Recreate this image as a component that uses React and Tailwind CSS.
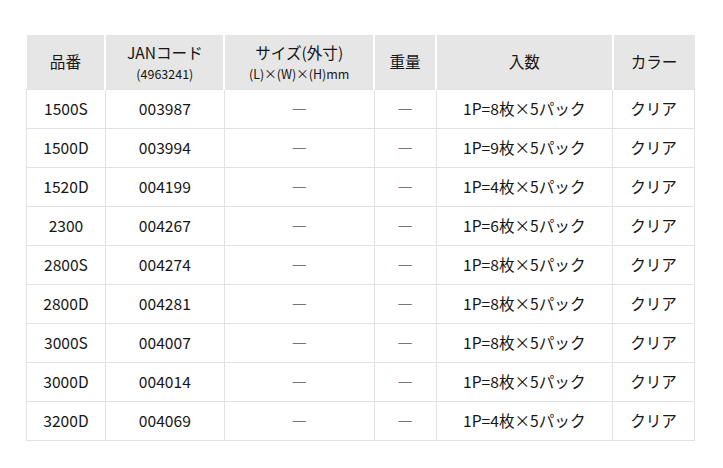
import React from "react";

const rows = [
  ["1500S", "003987", "1P=8枚×5パック"],
  ["1500D", "003994", "1P=9枚×5パック"],
  ["1520D", "004199", "1P=4枚×5パック"],
  ["2300", "004267", "1P=6枚×5パック"],
  ["2800S", "004274", "1P=8枚×5パック"],
  ["2800D", "004281", "1P=8枚×5パック"],
  ["3000S", "004007", "1P=8枚×5パック"],
  ["3000D", "004014", "1P=8枚×5パック"],
  ["3200D", "004069", "1P=4枚×5パック"],
];

export default function App() {
  const td = "border border-[#e2e2e2] text-center h-[39px] p-0 pt-[1px]";
  const th = "bg-[#e6e6e6] border-x-2 border-white text-center font-normal p-0 first:border-l-0 last:border-r-0";
  return (
    <div className="w-[723px] h-[468px] bg-white pt-[35px] pl-[26px]" style={{ fontFamily: '"Noto Sans CJK JP", "Noto Sans", sans-serif' }}>
      <table className="border-collapse text-[15.6px] text-[#161616] leading-none" style={{ width: 669 }}>
        <colgroup>
          <col style={{ width: 79 }} />
          <col style={{ width: 119 }} />
          <col style={{ width: 150 }} />
          <col style={{ width: 62 }} />
          <col style={{ width: 177 }} />
          <col style={{ width: 82 }} />
        </colgroup>
        <thead>
          <tr className="h-[54px]">
            <th className={th}>品番</th>
            <th className={th}>
              <div className="pt-[2px]">JANコード</div>
              <div className="text-[12.5px] mt-[7px]">(4963241)</div>
            </th>
            <th className={th}>
              <div className="pt-[2px]">サイズ(外寸)</div>
              <div className="text-[12.5px] mt-[7px]">(L)×(W)×(H)mm</div>
            </th>
            <th className={th}>重量</th>
            <th className={th}>入数</th>
            <th className={th}>カラー</th>
          </tr>
        </thead>
        <tbody>
          {rows.map((r) => (
            <tr key={r[0]}>
              <td className={td}>{r[0]}</td>
              <td className={td}>{r[1]}</td>
              <td className={td + " text-[#555]"}>―</td>
              <td className={td + " text-[#555]"}>―</td>
              <td className={td}>{r[2]}</td>
              <td className={td}>クリア</td>
            </tr>
          ))}
        </tbody>
      </table>
    </div>
  );
}
